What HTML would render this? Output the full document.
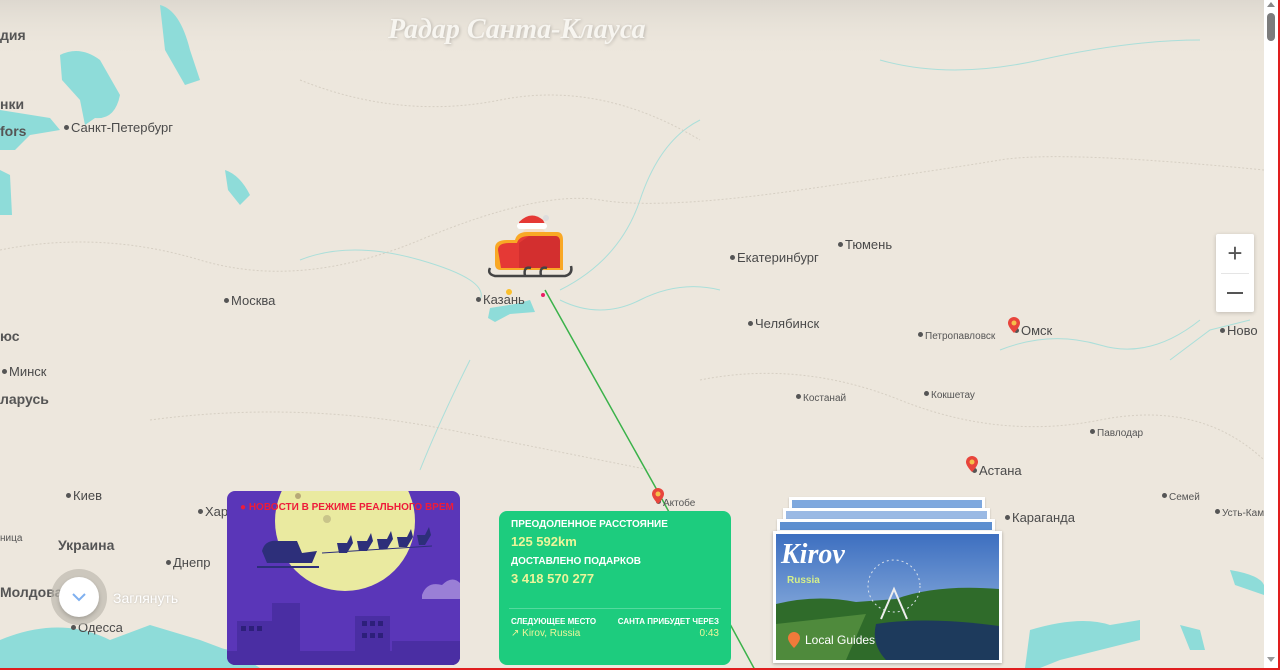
<!DOCTYPE html>
<html><head><meta charset="utf-8"><style>
body{margin:0;width:1280px;height:670px;overflow:hidden;background:#fff;font-family:"Liberation Sans",sans-serif;position:relative}
#map{position:absolute;left:0;top:0;width:1264px;height:668px;background:#ede7dd;overflow:hidden}
.c{position:absolute;font-size:13px;color:#4a4a4a;white-space:nowrap;line-height:14px}
.c.s{font-size:10px;color:#555}
.c.b{font-size:14px;font-weight:bold;color:#555}
.d{display:inline-block;width:5px;height:5px;border-radius:50%;background:#555;margin-right:2px;vertical-align:2px}
.card{position:absolute;border-radius:8px;overflow:hidden}
</style></head><body>
<div id="map">
<svg width="1264" height="668" style="position:absolute;left:0;top:0">
<defs><linearGradient id="tg" x1="0" y1="0" x2="0" y2="1"><stop offset="0" stop-color="#ddd8cf"/><stop offset="1" stop-color="#ede7dd" stop-opacity="0"/></linearGradient></defs>
<rect width="1264" height="60" fill="url(#tg)"/>
<g fill="#8edcd9">
<path d="M60 55 Q80 45 100 60 L120 95 Q115 120 95 118 L85 125 L80 100 L62 80Z"/>
<path d="M160 5 Q180 10 190 50 L200 80 L185 85 L165 50Z"/>
<path d="M0 110 L50 118 L60 130 L30 135 L15 150 L0 150Z"/>
<path d="M0 170 L10 175 L12 215 L0 215Z"/>
<path d="M225 170 Q240 175 250 195 L240 205 L228 190Z"/>
<path d="M0 640 Q60 615 110 640 L150 625 L200 640 L240 655 L260 668 L0 668Z"/>
<path d="M140 650 Q180 640 230 650 L240 668 L130 668Z"/>
<path d="M1030 630 Q1080 615 1110 625 L1140 620 L1140 640 L1100 650 L1060 660 L1040 668 L1025 668Z"/>
<path d="M1230 570 Q1260 575 1264 585 L1264 595 L1235 585Z"/>
<path d="M1180 625 L1200 630 L1205 650 L1190 650Z"/>
<path d="M490 308 L515 304 L530 300 L535 312 L510 314 L495 322 L488 318Z"/>
</g>
<g fill="none" stroke="#8edcd9" stroke-width="1" opacity=".7">
<path d="M300 260 Q350 240 420 260 T480 300"/>
<path d="M560 290 Q620 260 640 200 T700 120"/>
<path d="M560 300 Q600 320 640 300 T720 290"/>
<path d="M470 360 Q440 420 420 470"/>
<path d="M880 60 Q950 80 1040 60 T1200 40"/>
<path d="M1000 350 Q1050 330 1100 345 T1200 320"/>
<path d="M1170 360 L1210 330 L1250 320"/>
</g>
<g fill="none" stroke="#d6cfc3" stroke-width="1" stroke-dasharray="2 2">
<path d="M0 250 Q100 230 200 260 T420 240 T600 200 T800 190 T1000 160 T1264 170"/>
<path d="M700 380 Q800 360 900 400 T1100 420 T1264 460"/>
<path d="M150 420 Q300 400 450 430 T650 470"/>
<path d="M300 80 Q400 120 500 100 T700 140"/>
</g>
<path d="M545 290 L657 490 L755 670" stroke="#3bb24a" stroke-width="1.5" fill="none"/>
</svg>
<div style="position:absolute;left:388px;top:14px;font-family:'Liberation Serif',serif;font-style:italic;font-weight:bold;font-size:28px;color:#f7f5f0;text-shadow:1px 1px 3px rgba(0,0,0,.2)">Радар Санта-Клауса</div>

<div class="c b" style="left:0;top:28px">дия</div>
<div class="c b" style="left:0;top:97px">нки</div>
<div class="c b" style="left:0;top:124px">fors</div>
<div class="c" style="left:64px;top:121px"><span class="d"></span>Санкт-Петербург</div>
<div class="c" style="left:224px;top:294px"><span class="d"></span>Москва</div>
<div class="c" style="left:476px;top:293px"><span class="d"></span>Казань</div>
<div class="c" style="left:730px;top:251px"><span class="d"></span>Екатеринбург</div>
<div class="c" style="left:838px;top:238px"><span class="d"></span>Тюмень</div>
<div class="c" style="left:748px;top:317px"><span class="d"></span>Челябинск</div>
<div class="c s" style="left:918px;top:330px"><span class="d"></span>Петропавловск</div>
<div class="c" style="left:1014px;top:324px"><span class="d"></span>Омск</div>
<div class="c" style="left:1220px;top:324px"><span class="d"></span>Ново</div>
<div class="c s" style="left:796px;top:392px"><span class="d"></span>Костанай</div>
<div class="c s" style="left:924px;top:389px"><span class="d"></span>Кокшетау</div>
<div class="c s" style="left:1090px;top:427px"><span class="d"></span>Павлодар</div>
<div class="c" style="left:972px;top:464px"><span class="d"></span>Астана</div>
<div class="c s" style="left:1162px;top:491px"><span class="d"></span>Семей</div>
<div class="c s" style="left:1215px;top:507px"><span class="d"></span>Усть-Кам</div>
<div class="c" style="left:1005px;top:511px"><span class="d"></span>Караганда</div>
<div class="c s" style="left:656px;top:497px"><span class="d"></span>Актобе</div>
<div class="c b" style="left:0;top:329px">юс</div>
<div class="c" style="left:2px;top:365px"><span class="d"></span>Минск</div>
<div class="c b" style="left:0;top:392px">ларусь</div>
<div class="c" style="left:66px;top:489px"><span class="d"></span>Киев</div>
<div class="c" style="left:198px;top:505px"><span class="d"></span>Харь</div>
<div class="c s" style="left:0;top:532px">ница</div>
<div class="c b" style="left:58px;top:538px">Украина</div>
<div class="c" style="left:166px;top:556px"><span class="d"></span>Днепр</div>
<div class="c b" style="left:0;top:585px">Молдова</div>
<div class="c" style="left:71px;top:621px"><span class="d"></span>Одесса</div>

<svg width="20" height="20" style="position:absolute;left:1007px;top:316px"><path d="M7 1a6 6 0 0 1 6 6c0 4-6 10-6 10s-6-6-6-10a6 6 0 0 1 6-6z" fill="#e8453c"/><circle cx="7" cy="7" r="2.5" fill="#f5c04a"/></svg>
<svg width="20" height="20" style="position:absolute;left:965px;top:455px"><path d="M7 1a6 6 0 0 1 6 6c0 4-6 10-6 10s-6-6-6-10a6 6 0 0 1 6-6z" fill="#e8453c"/><circle cx="7" cy="7" r="2.5" fill="#f5c04a"/></svg>
<svg width="20" height="20" style="position:absolute;left:651px;top:487px"><path d="M7 1a6 6 0 0 1 6 6c0 4-6 10-6 10s-6-6-6-10a6 6 0 0 1 6-6z" fill="#e8453c"/><circle cx="7" cy="7" r="2.5" fill="#f5c04a"/></svg>

<svg width="90" height="90" style="position:absolute;left:485px;top:210px">
<path d="M34 12 Q46 0 58 10 L60 14 L34 16Z" fill="#e53935"/><rect x="32" y="13" width="30" height="6" rx="3" fill="#fff"/><circle cx="61" cy="8" r="3" fill="#ddd"/>
<rect x="38" y="19" width="22" height="10" rx="4" fill="#f6dcc4"/>
<path d="M10 38 Q10 30 22 30 L30 30 Q32 22 42 22 L72 22 Q78 22 78 30 L78 60 L16 60 Q10 60 10 54Z" fill="#f9a825"/>
<path d="M13 40 Q13 33 24 33 L32 33 Q34 26 44 26 L70 26 Q75 26 75 32 L75 58 L16 58 Z" fill="#e53935"/>
<path d="M34 33 L34 58 L75 58 L75 32 Q75 26 70 26 L44 26Z" fill="#d32f2f"/>
<path d="M5 58 Q2 64 10 66 L80 66 Q88 64 86 56" stroke="#444" stroke-width="2.5" fill="none"/>
<path d="M40 66 Q38 56 46 58 M56 66 Q54 56 62 58" stroke="#444" stroke-width="2.5" fill="none"/>
<circle cx="24" cy="82" r="3" fill="#fbc02d"/><circle cx="58" cy="85" r="2" fill="#e91e63"/>
</svg>
</div>

<div style="position:absolute;left:1216px;top:234px;width:38px;height:78px;background:#fff;box-shadow:0 1px 4px rgba(0,0,0,.2);border-radius:2px">
<div style="position:absolute;left:0;top:0;width:38px;height:39px;text-align:center;font-size:26px;line-height:39px;color:#555">+</div>
<div style="position:absolute;left:5px;top:39px;width:28px;height:1px;background:#e5e5e5"></div>
<div style="position:absolute;left:11px;top:58px;width:16px;height:2px;background:#555"></div>
</div>

<div style="position:absolute;left:1264px;top:0;width:14px;height:668px;background:#fff"></div>
<div style="position:absolute;left:1267px;top:13px;width:8px;height:28px;border-radius:4px;background:#7c7c7c"></div>
<div style="position:absolute;left:1267px;top:2px;width:0;height:0;border-left:4px solid transparent;border-right:4px solid transparent;border-bottom:5px solid #888"></div>
<div style="position:absolute;left:1267px;top:657px;width:0;height:0;border-left:4px solid transparent;border-right:4px solid transparent;border-top:5px solid #999"></div>
<div style="position:absolute;left:1278px;top:0;width:2px;height:670px;background:#e01e1e"></div>
<div style="position:absolute;left:0;top:668px;width:1280px;height:2px;background:#e01e1e"></div>

<div style="position:absolute;left:51px;top:569px;width:56px;height:56px;border-radius:50%;background:rgba(190,185,175,.7)"></div>
<div style="position:absolute;left:59px;top:577px;width:40px;height:40px;border-radius:50%;background:#fff;box-shadow:0 2px 4px rgba(0,0,0,.2)"></div>
<svg width="16" height="10" style="position:absolute;left:71px;top:592px"><path d="M2 2 L8 8 L14 2" stroke="#7fb0ef" stroke-width="2" fill="none"/></svg>
<div style="position:absolute;left:113px;top:590px;font-size:14px;color:#fff;text-shadow:0 0 2px rgba(0,0,0,.2)">Заглянуть</div>

<div class="card" style="left:227px;top:491px;width:233px;height:174px;background:#5a36b8">
<svg width="233" height="174" style="position:absolute;left:0;top:0">
<circle cx="118" cy="30" r="70" fill="#eaeaa0"/>
<circle cx="71" cy="5" r="3" fill="#b7a977"/><circle cx="100" cy="28" r="4" fill="#c9c48a"/>
<path d="M195 104 Q200 90 215 94 Q225 84 233 92 L233 108 L195 108Z" fill="#9a7fd6"/>
<g fill="#2d2f7a">
<path d="M35 60 Q38 48 52 50 L70 50 L75 62 L90 60 L85 72 L40 72Z"/>
<path d="M30 76 L92 76" stroke="#2d2f7a" stroke-width="2"/>
<path d="M95 62 L205 55" stroke="#2d2f7a" stroke-width="1"/>
<path d="M110 52 L120 52 L124 44 L126 52 L120 62 L112 62Z"/><path d="M130 50 L140 50 L144 42 L146 50 L140 60 L132 60Z"/><path d="M150 48 L160 48 L164 40 L166 48 L160 58 L152 58Z"/><path d="M170 46 L180 46 L184 38 L186 46 L180 56 L172 56Z"/><path d="M190 44 L198 44 L202 36 L204 44 L198 54 L192 54Z"/>
</g>
<g fill="#4a2ea3">
<rect x="45" y="112" width="28" height="62"/><rect x="10" y="130" width="35" height="44"/><rect x="128" y="125" width="35" height="49"/><rect x="165" y="150" width="68" height="24"/><rect x="0" y="160" width="233" height="14"/>
</g>
<g fill="#2d1f7a"><rect x="14" y="135" width="5" height="5"/><rect x="22" y="135" width="5" height="5"/><rect x="30" y="135" width="5" height="5"/><rect x="135" y="130" width="5" height="5"/><rect x="143" y="130" width="5" height="5"/><rect x="151" y="130" width="5" height="5"/><rect x="135" y="142" width="5" height="5"/><rect x="143" y="142" width="5" height="5"/><rect x="151" y="142" width="5" height="5"/></g>
</svg>
<div style="position:absolute;left:13px;top:11px;font-size:10px;font-weight:bold;color:#ee1c3a;white-space:nowrap">● НОВОСТИ В РЕЖИМЕ РЕАЛЬНОГО ВРЕМ</div>
</div>

<div class="card" style="left:499px;top:511px;width:232px;height:154px;background:#1dcc7e;color:#fff">
<div style="position:absolute;left:12px;top:8px;font-size:10px;font-weight:bold">ПРЕОДОЛЕННОЕ РАССТОЯНИЕ</div>
<div style="position:absolute;left:12px;top:23px;font-size:13px;font-weight:bold;color:#ecf59a">125 592km</div>
<div style="position:absolute;left:12px;top:45px;font-size:10px;font-weight:bold">ДОСТАВЛЕНО ПОДАРКОВ</div>
<div style="position:absolute;left:12px;top:60px;font-size:13px;font-weight:bold;color:#ecf59a">3 418 570 277</div>
<div style="position:absolute;left:10px;top:97px;width:212px;height:1px;background:rgba(255,255,255,.25)"></div>
<div style="position:absolute;left:12px;top:106px;font-size:8px;font-weight:bold">СЛЕДУЮЩЕЕ МЕСТО</div>
<div style="position:absolute;right:12px;top:106px;font-size:8px;font-weight:bold">САНТА ПРИБУДЕТ ЧЕРЕЗ</div>
<div style="position:absolute;left:12px;top:117px;font-size:10px;color:#ecf59a">↗ Kirov, Russia</div>
<div style="position:absolute;right:12px;top:117px;font-size:10px;color:#ecf59a">0:43</div>
</div>

<div style="position:absolute;left:789px;top:497px;width:196px;height:14px;background:#fff;box-shadow:0 1px 2px rgba(0,0,0,.2)"><div style="margin:3px;height:8px;background:#7ea8de"></div></div>
<div style="position:absolute;left:783px;top:508px;width:207px;height:14px;background:#fff;box-shadow:0 1px 2px rgba(0,0,0,.2)"><div style="margin:3px;height:8px;background:#9ab9e4"></div></div>
<div style="position:absolute;left:777px;top:519px;width:218px;height:14px;background:#fff;box-shadow:0 1px 2px rgba(0,0,0,.2)"><div style="margin:3px;height:8px;background:#5d8fd0"></div></div>
<div style="position:absolute;left:773px;top:531px;width:229px;height:132px;background:#fff;box-shadow:0 1px 3px rgba(0,0,0,.3)">
<svg width="223" height="126" style="position:absolute;left:3px;top:3px">
<defs><linearGradient id="sk" x1="0" y1="0" x2="0" y2="1"><stop offset="0" stop-color="#3d6fc0"/><stop offset="1" stop-color="#a9c6e8"/></linearGradient></defs>
<rect width="223" height="126" fill="url(#sk)"/>
<path d="M0 70 Q40 60 80 68 L120 65 Q160 50 223 55 L223 126 L0 126Z" fill="#2f6b2a"/>
<path d="M0 90 L90 80 L70 126 L0 126Z" fill="#4f8a3c"/>
<path d="M100 90 Q150 82 223 92 L223 126 L110 126 Q95 110 100 90Z" fill="#1d3a5c"/>
<circle cx="118" cy="52" r="26" fill="none" stroke="#d8e0ea" stroke-width="1" stroke-dasharray="2 3"/>
<path d="M105 85 L118 55 L131 85" stroke="#eee" stroke-width="2" fill="none"/>
</svg>
<div style="position:absolute;left:8px;top:8px;font-family:'Liberation Serif',serif;font-style:italic;font-weight:bold;font-size:28px;color:#fff">Kirov</div>
<div style="position:absolute;left:14px;top:44px;font-size:10px;font-weight:bold;color:#d5ef8a">Russia</div>
<svg width="14" height="18" style="position:absolute;left:14px;top:100px"><path d="M7 1a6 6 0 0 1 6 6c0 4-6 10-6 10s-6-6-6-10a6 6 0 0 1 6-6z" fill="#f07a3a"/></svg>
<div style="position:absolute;left:32px;top:102px;font-size:12px;color:#fff">Local Guides</div>
</div>
</body></html>
